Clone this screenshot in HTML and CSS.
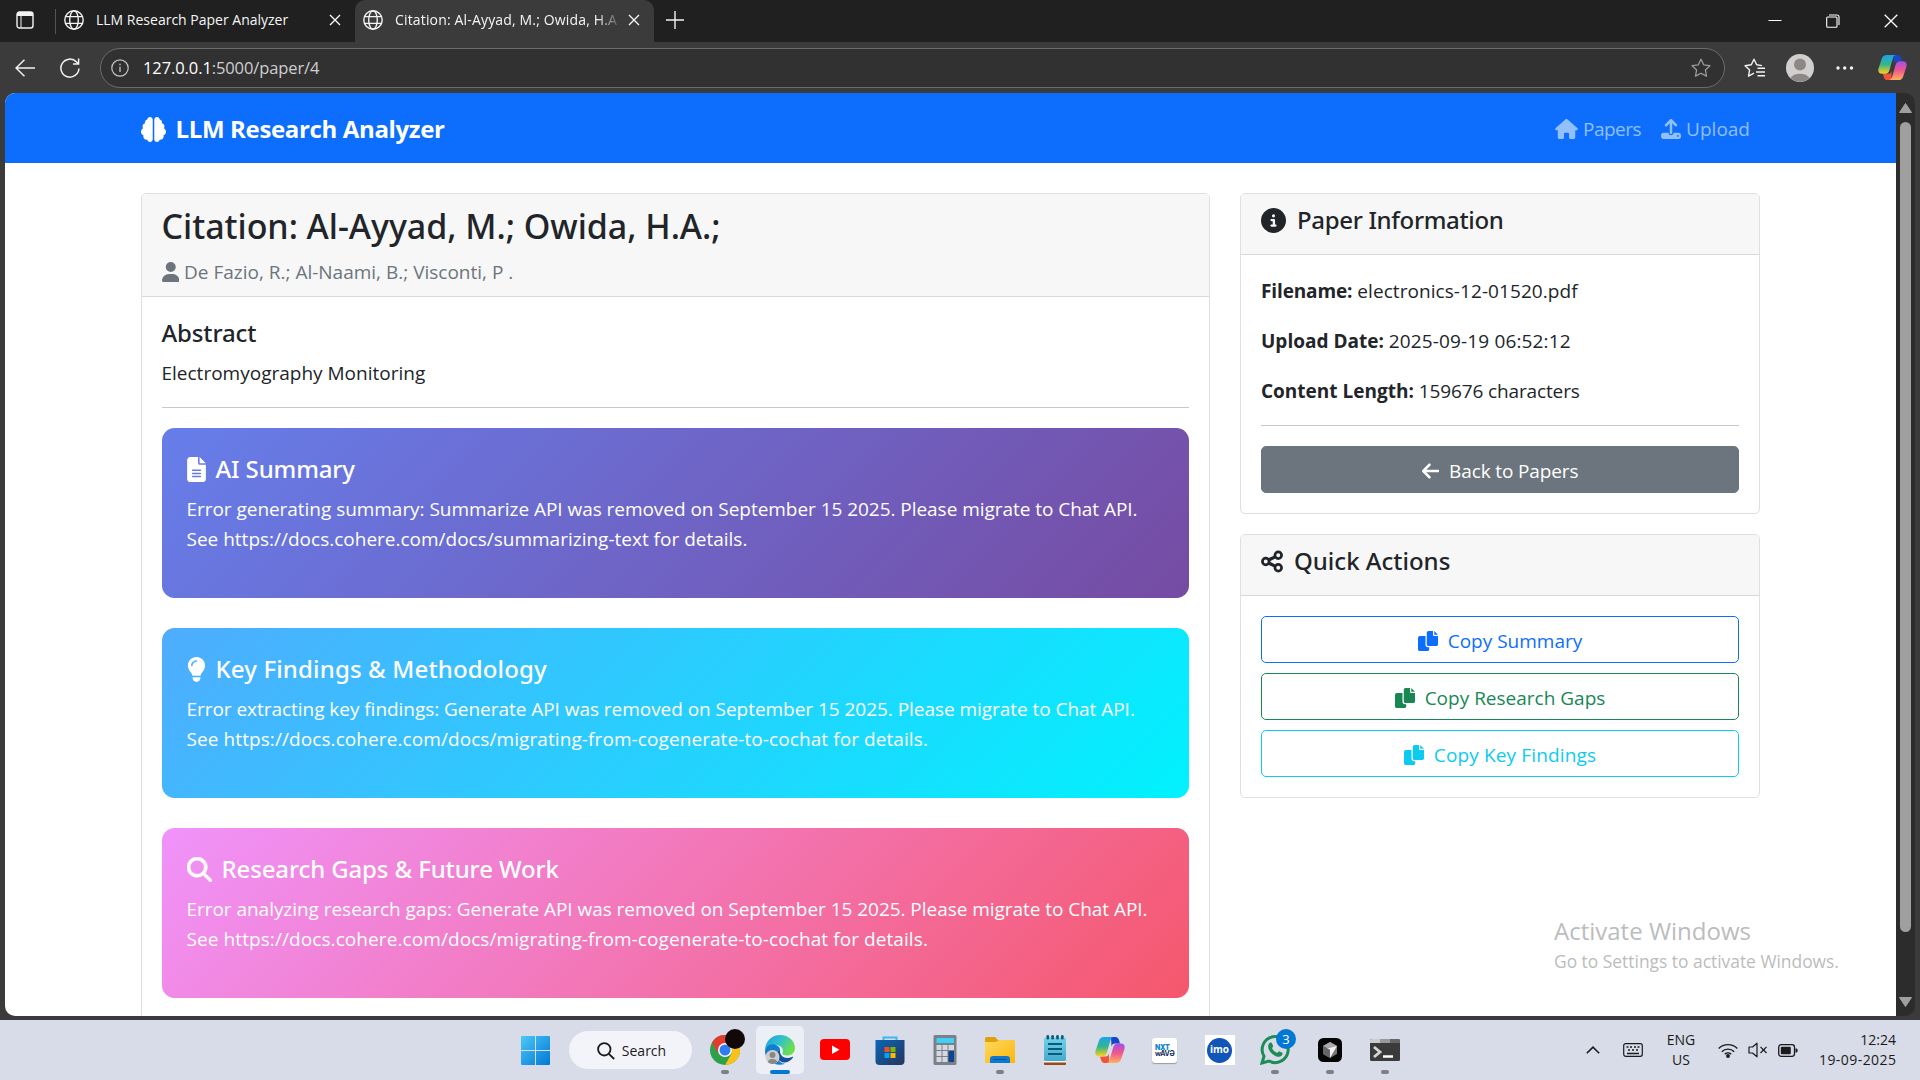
FILE: index.html
```html
<!DOCTYPE html>
<html lang="en">
<head>
<meta charset="utf-8">
<title>Citation: Al-Ayyad, M.; Owida, H.A.;</title>
<link rel="stylesheet" href="styles.css">
</head>
<body>
<svg class="defs" width="0" height="0" aria-hidden="true">
  <defs>
    <linearGradient id="cpA" x1="0" y1="0" x2="0" y2="1"><stop offset="0" stop-color="#1aa3f0"/><stop offset=".5" stop-color="#35b58a"/><stop offset="1" stop-color="#ffd21a"/></linearGradient>
    <linearGradient id="cpB" x1="0" y1="0" x2="0" y2="1"><stop offset="0" stop-color="#a54de8"/><stop offset=".5" stop-color="#f0588c"/><stop offset="1" stop-color="#ffb25a"/></linearGradient>
    <linearGradient id="win" x1="0" y1="0" x2="1" y2="1"><stop offset="0" stop-color="#4cc8f8"/><stop offset="1" stop-color="#0078d4"/></linearGradient>
    <linearGradient id="edgeTop" x1="0" y1="0" x2="1" y2=".5"><stop offset="0" stop-color="#1a9fe0"/><stop offset=".5" stop-color="#2fc0cf"/><stop offset="1" stop-color="#6be04a"/></linearGradient>
    <linearGradient id="folder" x1="0" y1="0" x2="1" y2="1"><stop offset="0" stop-color="#ffd75e"/><stop offset="1" stop-color="#fbb70a"/></linearGradient>
    <linearGradient id="store" x1="0" y1="0" x2="1" y2="1"><stop offset="0" stop-color="#0a66b8"/><stop offset="1" stop-color="#25355c"/></linearGradient>
    <linearGradient id="note" x1="0" y1="0" x2="0" y2="1"><stop offset="0" stop-color="#6fd3ea"/><stop offset="1" stop-color="#45a9cc"/></linearGradient>
    <symbol id="globe" viewBox="0 0 20 20"><g fill="none" stroke="#f2f2f2" stroke-width="1.4"><circle cx="10" cy="10" r="9.2"/><ellipse cx="10" cy="10" rx="4.3" ry="9.2"/><path d="M1.6 6.6h16.8M1.6 13.4h16.8"/></g></symbol>
    <symbol id="close" viewBox="0 0 12 12"><path d="M1 1l10 10M11 1L1 11" stroke="#f5f5f5" stroke-width="1.4"/></symbol>
    <symbol id="copilot" viewBox="0 0 30 28"><path d="M16 1h4.500c2 0 3 1.500 3.500 3l1 3.500h-5c-2 0-3 1-3.500 3z" fill="#1746c8"/><path d="M14 27H9.500c-2 0-3-1.500-3.500-3L5 20.500h5.500c2 0 3-1 3.500-3z" fill="#f0553a"/><path d="M9 1h10c-2 0-3 1.200-3.600 3.300L12 16c-.8 3-2 4.500-4.500 4.500H4c-3 0-4.300-2.500-3.500-5.500L4 4.500C4.700 2.300 6.500 1 9 1z" fill="url(#cpA)"/><path d="M21 27H11c2 0 3-1.200 3.600-3.300L18 12c.8-3 2-4.500 4.500-4.500H26c3 0 4.300 2.500 3.500 5.500L26 23.500c-.7 2.200-2.500 3.500-5 3.500z" fill="url(#cpB)"/></symbol>
    <symbol id="copy" viewBox="0 0 512 512"><path d="M384 96L384 0h-112c-26.510 0-48 21.490-48 48v288c0 26.510 21.490 48 48 48H464c26.510 0 48-21.490 48-48V128h-95.100C398.400 128 384 113.600 384 96zM416 0v96h96L416 0zM192 352V128h-144c-26.510 0-48 21.490-48 48v288c0 26.510 21.490 48 48 48h192c26.510 0 48-21.490 48-48L288 416h-32C220.700 416 192 387.300 192 352z"/></symbol>
  </defs>
</svg>

<header class="tabs">
  <div class="tab-actions"><svg width="18" height="18" viewBox="0 0 18 18"><rect x="1" y="1" width="16" height="16" rx="2.500" fill="none" stroke="#f2f2f2" stroke-width="1.400"/><path d="M1 3.500A2.500 2.500 0 0 1 3.500 1h11A2.500 2.500 0 0 1 17 3.500V5H1z" fill="#f2f2f2"/><path d="M5 5v12" stroke="#f2f2f2"/></svg></div>
  <div class="tab">
    <svg width="20" height="20"><use href="#globe"/></svg>
    <span class="tab-title">LLM Research Paper Analyzer</span>
    <svg width="12" height="12"><use href="#close"/></svg>
  </div>
  <div class="tab active">
    <svg width="20" height="20"><use href="#globe"/></svg>
    <span class="tab-title faded">Citation: Al-Ayyad, M.; Owida, H.A</span>
    <svg width="12" height="12"><use href="#close"/></svg>
  </div>
  <div class="new-tab"><svg width="18" height="18" viewBox="0 0 18 18"><path d="M9 0v18M0 9h18" stroke="#f2f2f2" stroke-width="1.400"/></svg></div>
  <div class="window-buttons">
    <svg width="14" height="14" viewBox="0 0 14 14"><path d="M.5 6.500h13" stroke="#fff"/></svg>
    <svg width="14" height="14" viewBox="0 0 14 14" fill="none" stroke="#fff" stroke-width="1.100"><rect x=".7" y="3" width="10.300" height="10.300" rx="1"/><path d="M3 1h8a2 2 0 0 1 2 2v8"/></svg>
    <svg width="14" height="14" viewBox="0 0 14 14"><path d="M.7.7l12.600 12.600M13.300.7L.7 13.300" stroke="#fff" stroke-width="1.300"/></svg>
  </div>
</header>

<div class="toolbar">
  <svg width="20" height="18" viewBox="0 0 20 18" fill="none" stroke="#f2f2f2" stroke-width="1.500"><path d="M20 9H1M9.500.8L1 9l8.500 8.200"/></svg>
  <svg class="reload" width="20" height="20" viewBox="0 0 20 20" fill="none" stroke="#f2f2f2" stroke-width="1.500"><path d="M18.900 10.500A9 9 0 1 1 16.500 4l2 1.800M18.600.5v5.600h-5.600"/></svg>
  <div class="address">
    <svg width="18" height="18" viewBox="0 0 18 18"><circle cx="9" cy="9" r="8.200" fill="none" stroke="#c4c4c4" stroke-width="1.200"/><path d="M9 7.800V13M9 4.800v1.500" stroke="#c4c4c4" stroke-width="1.300"/></svg>
    <span class="url"><b>127.0.0.1</b>:5000/paper/4</span>
    <svg width="20" height="20" viewBox="0 0 20 20" fill="none" stroke="#9c9c9c" stroke-width="1.300" stroke-linejoin="round"><path d="M10 1.200l2.700 5.600 6.200.9-4.500 4.300 1.100 6.100L10 15.200l-5.500 2.900 1.100-6.100L1.100 7.700l6.200-.9z"/></svg>
  </div>
  <svg class="fav" width="21" height="20" viewBox="0 0 21 20" fill="none" stroke="#f2f2f2" stroke-width="1.400" stroke-linejoin="round"><path d="M18 7.600l-5.300-.8L10 1.200 7.300 6.800l-6.200.9L5.600 12l-1.100 6.100 5.500-2.900M13.500 10.300H21M12 14h9M13.500 17.800H21"/></svg>
  <svg class="avatar" width="28" height="28" viewBox="0 0 28 28"><circle cx="14" cy="14" r="14" fill="#d2d0ce"/><circle cx="14" cy="10.500" r="6" fill="#8d8885"/><path d="M4.500 24a10.300 7 0 0 1 19 0 14 14 0 0 1-19 0z" fill="#8d8885"/></svg>
  <svg class="dots" width="18" height="4" viewBox="0 0 18 4" fill="#f2f2f2"><circle cx="2" cy="2" r="1.700"/><circle cx="8.700" cy="2" r="1.700"/><circle cx="15.500" cy="2" r="1.700"/></svg>
  <svg width="29" height="27"><use href="#copilot"/></svg>
</div>

<div class="window">
  <div class="page">
    <nav class="navbar">
      <a class="brand"><svg width="25" height="25" viewBox="0 0 512 512"><path d="M184 0c30.900 0 56 25.100 56 56V456c0 30.900-25.100 56-56 56c-28.900 0-52.700-21.900-55.700-50.100c-5.200 1.400-10.700 2.100-16.300 2.100c-35.300 0-64-28.700-64-64c0-7.400 1.300-14.600 3.600-21.200C21.400 367.400 0 338.200 0 304c0-31.900 18.700-59.500 45.800-72.300C37.100 220.800 32 207 32 192c0-30.700 21.600-56.300 50.400-62.600C80.800 123.900 80 118 80 112c0-29.900 20.600-55.100 48.300-62.100C131.300 21.900 155.100 0 184 0zM328 0c28.900 0 52.600 21.900 55.700 49.900c27.800 7 48.300 32.100 48.300 62.100c0 6-.8 11.900-2.400 17.400c28.800 6.200 50.400 31.900 50.400 62.600c0 15-5.100 28.800-13.800 39.700C493.300 244.500 512 272.100 512 304c0 34.200-21.400 63.400-51.600 74.800c2.300 6.600 3.600 13.800 3.600 21.200c0 35.300-28.700 64-64 64c-5.600 0-11.100-.7-16.300-2.100c-3 28.200-26.800 50.100-55.700 50.100c-30.900 0-56-25.100-56-56V56c0-30.900 25.100-56 56-56z"/></svg><span>LLM Research Analyzer</span></a>
      <div class="links">
        <a class="link papers"><svg width="23" height="20" viewBox="0 0 576 512"><path d="M575.800 255.500c0 18-15 32.100-32 32.100h-32l.7 160.200c0 2.700-.2 5.400-.5 8.100V472c0 22.100-17.900 40-40 40H456c-1.100 0-2.200 0-3.300-.1c-1.400 .1-2.800 .1-4.200 .1H416 392c-22.100 0-40-17.900-40-40V448 384c0-17.700-14.300-32-32-32H256c-17.700 0-32 14.300-32 32v64 24c0 22.100-17.900 40-40 40H160 128.100c-1.500 0-3-.1-4.500-.2c-1.200 .1-2.400 .2-3.600 .2H104c-22.100 0-40-17.900-40-40V360c0-.9 0-1.900 .1-2.800V287.600H32c-18 0-32-14-32-32.100c0-9 3-17 10-24L266.400 8c7-7 15-8 22-8s15 2 21 7L564.800 231.500c8 7 12 15 11 24z"/></svg><span>Papers</span></a>
        <a class="link"><svg width="20" height="20" viewBox="0 0 512 512"><path d="M288 109.300V352c0 17.700-14.300 32-32 32s-32-14.300-32-32V109.300l-73.400 73.400c-12.500 12.500-32.800 12.500-45.300 0s-12.500-32.800 0-45.300l128-128c12.500-12.500 32.800-12.500 45.300 0l128 128c12.500 12.500 12.500 32.800 0 45.300s-32.800 12.500-45.300 0L288 109.300zM64 352H192c0 35.300 28.700 64 64 64s64-28.700 64-64H448c35.300 0 64 28.700 64 64v32c0 35.300-28.700 64-64 64H64c-35.300 0-64-28.700-64-64V416c0-35.300 28.700-64 64-64zM432 456a24 24 0 1 0 0-48 24 24 0 1 0 0 48z"/></svg><span>Upload</span></a>
      </div>
    </nav>
    <main class="container">
      <article class="card paper">
        <div class="card-header">
          <h1>Citation: Al-Ayyad, M.; Owida, H.A.;</h1>
          <p class="authors"><svg width="17.500" height="20" viewBox="0 0 448 512"><path d="M224 256A128 128 0 1 0 224 0a128 128 0 1 0 0 256zm-45.700 48C79.800 304 0 383.800 0 482.300C0 498.700 13.300 512 29.700 512H418.300c16.400 0 29.700-13.300 29.700-29.700C448 383.800 368.200 304 269.700 304H178.300z"/></svg><span>De Fazio, R.; Al-Naami, B.; Visconti, P .</span></p>
        </div>
        <div class="card-body">
          <h2><span class="tight">Abstract</span></h2>
          <p>Electromyography Monitoring</p>
          <hr>
          <section class="panel summary">
            <h2><svg width="19" height="25" viewBox="0 0 384 512"><path d="M64 0C28.700 0 0 28.700 0 64V448c0 35.300 28.700 64 64 64H320c35.300 0 64-28.700 64-64V160H256c-17.700 0-32-14.300-32-32V0H64zM256 0V128H384L256 0zM112 256H272c8.800 0 16 7.200 16 16s-7.200 16-16 16H112c-8.800 0-16-7.200-16-16s7.200-16 16-16zm0 64H272c8.800 0 16 7.200 16 16s-7.200 16-16 16H112c-8.800 0-16-7.200-16-16s7.200-16 16-16zm0 64H272c8.800 0 16 7.200 16 16s-7.200 16-16 16H112c-8.800 0-16-7.200-16-16s7.200-16 16-16z"/></svg><span class="tight">AI Summary</span></h2>
            <p><span class="first">Error generating summary: Summarize API was removed on September 15 2025. Please migrate to Chat API.</span><br><span>See https://docs.cohere.com/docs/summarizing-text for details.</span></p>
          </section>
          <section class="panel findings">
            <h2><svg width="19" height="25" viewBox="0 0 384 512"><path d="M272 384c9.600-31.900 29.500-59.100 49.200-86.200l0 0c5.200-7.100 10.400-14.200 15.400-21.400c19.800-28.500 31.400-63 31.400-100.300C368 78.800 289.200 0 192 0S16 78.800 16 176c0 37.300 11.600 71.900 31.400 100.300c5 7.200 10.200 14.300 15.400 21.400l0 0c19.800 27.100 39.700 54.400 49.200 86.200H272zM192 512c44.200 0 80-35.800 80-80V416H112v16c0 44.200 35.800 80 80 80zM112 176c0 8.800-7.200 16-16 16s-16-7.200-16-16c0-61.900 50.100-112 112-112c8.800 0 16 7.200 16 16s-7.200 16-16 16c-44.200 0-80 35.800-80 80z"/></svg><span class="loose">Key Findings &amp; Methodology</span></h2>
            <p><span class="first">Error extracting key findings: Generate API was removed on September 15 2025. Please migrate to Chat API.</span><br><span class="url-line">See https://docs.cohere.com/docs/migrating-from-cogenerate-to-cochat for details.</span></p>
          </section>
          <section class="panel gaps">
            <h2><svg width="25" height="25" viewBox="0 0 512 512"><path stroke="#fff" stroke-width="10" d="M416 208c0 45.900-14.900 88.300-40 122.700L502.600 457.400c12.500 12.500 12.500 32.800 0 45.300s-32.800 12.500-45.300 0L330.700 376c-34.400 25.200-76.800 40-122.700 40C93.100 416 0 322.900 0 208S93.100 0 208 0S416 93.100 416 208zM208 352a144 144 0 1 0 0-288 144 144 0 1 0 0 288z"/></svg><span class="tight">Research Gaps &amp; Future Work</span></h2>
            <p><span class="first">Error analyzing research gaps: Generate API was removed on September 15 2025. Please migrate to Chat API.</span><br><span class="url-line">See https://docs.cohere.com/docs/migrating-from-cogenerate-to-cochat for details.</span></p>
          </section>
        </div>
      </article>
      <aside class="side">
        <section class="card">
          <div class="card-header"><h2><svg width="25" height="25" viewBox="0 0 512 512"><path d="M256 512A256 256 0 1 0 256 0a256 256 0 1 0 0 512zM216 336h24V272H216c-13.300 0-24-10.700-24-24s10.700-24 24-24h48c13.300 0 24 10.700 24 24v88h8c13.300 0 24 10.700 24 24s-10.700 24-24 24H216c-13.300 0-24-10.700-24-24s10.700-24 24-24zm40-208a32 32 0 1 1 0 64 32 32 0 1 1 0-64z"/></svg><span class="info-title">Paper Information</span></h2></div>
          <div class="card-body">
            <p><strong class="tight">Filename:</strong> <span class="file">electronics-12-01520.pdf</span></p>
            <p><strong>Upload Date:</strong> <span class="loose">2025-09-19 06:52:12</span></p>
            <p><strong>Content Length:</strong> <span class="tight">159676 characters</span></p>
            <hr>
            <a class="btn solid"><svg width="17.500" height="20" viewBox="0 0 448 512"><path d="M9.400 233.400c-12.500 12.500-12.500 32.800 0 45.300l160 160c12.500 12.500 32.800 12.500 45.300 0s12.500-32.800 0-45.300L109.200 288 416 288c17.700 0 32-14.300 32-32s-14.300-32-32-32l-306.700 0L214.600 118.600c12.500-12.500 12.500-32.800 0-45.300s-32.800-12.500-45.300 0l-160 160z"/></svg><span class="tight">Back to Papers</span></a>
          </div>
        </section>
        <section class="card">
          <div class="card-header"><h2><svg width="22" height="25" viewBox="0 0 448 512"><g fill="none" stroke="#212529"><g stroke-width="56"><circle cx="352" cy="128" r="68"/><circle cx="96" cy="256" r="68"/><circle cx="352" cy="384" r="68"/></g><path d="M165 222l122-61M165 290l122 61" stroke-width="68"/></g></svg><span>Quick Actions</span></h2></div>
          <div class="card-body buttons">
            <a class="btn blue"><svg width="20" height="20"><use href="#copy"/></svg><span>Copy Summary</span></a>
            <a class="btn green"><svg width="20" height="20"><use href="#copy"/></svg><span>Copy Research Gaps</span></a>
            <a class="btn cyan"><svg width="20" height="20"><use href="#copy"/></svg><span class="loose">Copy Key Findings</span></a>
          </div>
        </section>
      </aside>
    </main>
  </div>
  <div class="scrollbar">
    <svg width="13" height="10" viewBox="0 0 13 10"><path d="M6.500.5L12.500 9.500H.5z" fill="#9f9f9f" stroke="#9f9f9f" stroke-linejoin="round"/></svg>
    <div class="thumb"></div>
    <svg width="13" height="10" viewBox="0 0 13 10"><path d="M6.500 9.500L12.500.5H.5z" fill="#9f9f9f" stroke="#9f9f9f" stroke-linejoin="round"/></svg>
  </div>
</div>

<div class="watermark"><div class="wm-title">Activate Windows</div><div class="wm-text">Go to Settings to activate Windows.</div></div>

<footer class="taskbar">
  <div class="cell"><svg width="29" height="29" viewBox="0 0 29 29" fill="url(#win)"><path d="M1 0h13v14H0V1a1 1 0 0 1 1-1zM15 0h13a1 1 0 0 1 1 1v13H15zM0 15h14v14H1a1 1 0 0 1-1-1zM15 15h14v13a1 1 0 0 1-1 1H15z"/></svg></div>
  <div class="search"><svg width="18" height="18" viewBox="0 0 18 18" fill="none" stroke="#1b1b1b" stroke-width="1.800"><circle cx="7.300" cy="7.300" r="6.200"/><path d="M11.800 11.800l5.400 5.200"/></svg><span>Search</span></div>
  <div class="apps">
    <div class="cell running"><svg width="30" height="30" viewBox="0 0 30 30"><circle cx="15" cy="15" r="15" fill="#2da04a"/><path d="M2 7.500A15 15 0 0 1 28 7.500H15L8.500 18.800z" fill="#e33b2e"/><path d="M28 7.500A15 15 0 0 1 15 30l6.500-11.200V7.500z" fill="#fbc116"/><circle cx="15" cy="15" r="7" fill="#fff"/><circle cx="15" cy="15" r="5.500" fill="#2f7bf0"/></svg><i class="profile"></i></div>
    <div class="cell current"><svg width="30" height="30" viewBox="0 0 30 30"><path d="M0 16C0 6 7 0 15 0c9 0 15 6.500 15 13 0 5-4 7.500-8 7.500-3.500 0-5-1.300-4.500-2.500 1-2 .8-6-4-7.500C8 9 2 11 0 16z" fill="url(#edgeTop)"/><path d="M0 16c1-5 6-8 11-6 3 1.200 4 3 4 4.500-3 1-4.500 5-3 8.500 1.300 3.300 4.500 5.500 8 5.800C11 32 0 26.500 0 16z" fill="#0f7fcf"/><path d="M15 14.500c-3 1-4 5-2.500 8.500 2.500 5.500 10.500 6.500 15.500-.5.500-.8-.2-1-1-.6-6 3-13-.4-12-7.400z" fill="#12509c"/><circle cx="7.500" cy="22" r="7" fill="#d0cecc"/><circle cx="7.500" cy="20" r="3" fill="#8a8886"/><path d="M2.700 27a4.900 3.800 0 0 1 9.600 0 7 7 0 0 1-9.600 0z" fill="#8a8886"/></svg></div>
    <div class="cell"><svg width="30" height="30" viewBox="0 0 30 30"><rect y="4" width="30" height="21" rx="4" fill="#f00"/><path d="M12 10.500v8.500l7.500-4.200z" fill="#fff"/></svg></div>
    <div class="cell"><svg width="30" height="30" viewBox="0 0 30 30"><path d="M8.500 6V2.500h13V6" fill="none" stroke="#39b9f2" stroke-width="2"/><path d="M.5 5h29v21a4 4 0 0 1-4 4h-21a4 4 0 0 1-4-4z" fill="url(#store)"/><path d="M9.500 12h5v5h-5z" fill="#f25022"/><path d="M15.500 12h5v5h-5z" fill="#7fba00"/><path d="M9.500 18h5v5h-5z" fill="#00a4ef"/><path d="M15.500 18h5v5h-5z" fill="#ffb900"/></svg></div>
    <div class="cell"><svg width="24" height="30" viewBox="0 0 24 30"><rect x=".5" width="23" height="30" rx="1.500" fill="#7b8189"/><path d="M3.500 3h17.500v5H3.500z" fill="#3fd0f7"/><path d="M3.500 10h5v5h-5zM9.500 10h5v5h-5zM15.500 10h5.500v5h-5.500zM3.500 16h5v5h-5zM9.500 16h5v5h-5zM3.500 22h5v5h-5zM9.500 22h5v5h-5z" fill="#d3d9df"/><path d="M15.500 16h5.500v11h-5.500z" fill="#0f4391"/></svg></div>
    <div class="cell running"><svg width="30" height="28" viewBox="0 0 30 28"><path d="M0 2.500A1.500 1.500 0 0 1 1.500 1H10l3 3h15a2 2 0 0 1 2 2v6H0z" fill="#dfa00b"/><path d="M0 6h11l3-2h15a1 1 0 0 1 1 1v22H0z" fill="url(#folder)"/><path d="M5 27v-4a3 3 0 0 1 3-3h14a3 3 0 0 1 3 3v4z" fill="#0f78d0"/><path d="M9 23.500h12" stroke="#0b4f92" stroke-width="1.200" stroke-linecap="round"/></svg></div>
    <div class="cell"><svg width="22" height="30" viewBox="0 0 22 30"><rect y="25" width="22" height="5" rx="1" fill="#9a4a12"/><rect y="24" width="22" height="3.500" fill="#f3f3f3"/><rect y="2.500" width="22" height="23.500" rx="1.500" fill="url(#note)"/><path d="M4 9h14M4 14h14M4 19h14" stroke="#0c5a78" stroke-width="1.800"/><g fill="#0c5a78"><rect x="2.500" width="2.600" height="4.500" rx="1.300"/><rect x="7.300" width="2.600" height="4.500" rx="1.300"/><rect x="12.200" width="2.600" height="4.500" rx="1.300"/><rect x="17" width="2.600" height="4.500" rx="1.300"/></g></svg></div>
    <div class="cell"><svg width="30" height="28"><use href="#copilot"/></svg></div>
    <div class="cell"><div class="nxt"><b>NXT</b><br>wAVƏ</div></div>
    <div class="cell"><div class="imo"><span>imo</span></div></div>
    <div class="cell running"><svg width="30" height="30" viewBox="0 0 30 30"><path d="M2 28l2-6.800A13 13 0 1 1 9 26z" fill="none" stroke="#1d8c56" stroke-width="3"/><path d="M9 8.500c1.500-1.700 2.700-1 3.200.3l.9 2.200c.3.800-1.300 1.800-.8 2.800 1.200 2 2.700 3.200 4.600 4 .9.300 1.700-1.800 2.600-1.400l2.400 1.200c1.200.6.600 2.300-.3 3.200-2.200 2-5.600.9-8.300-1-3.400-2.600-6.900-7.400-4.300-11.300z" fill="#1d8c56"/></svg><i class="badge">3</i></div>
    <div class="cell running"><svg width="24" height="24" viewBox="0 0 24 24"><rect width="24" height="24" rx="5.500" fill="#050505"/><path d="M12 4l7 4v8l-7 4-7-4V8z" fill="#777"/><path d="M5 8l7-4 7 4-7 3.500z" fill="#aaa"/><path d="M19 8l-7 12v-8.500H6z" fill="#f2f2f2"/><path d="M5 8l7 4v8l-7-4z" fill="#666"/></svg></div>
    <div class="cell running"><svg width="30" height="22" viewBox="0 0 30 22"><rect width="30" height="22" rx="1.500" fill="#3b3b3b"/><path d="M0 4V1.500A1.500 1.500 0 0 1 1.500 0H10v4z" fill="#ccc"/><path d="M10 0h10v4H10z" fill="#999"/><path d="M20 0h8.500A1.500 1.500 0 0 1 30 1.500V4H20z" fill="#666"/><path d="M4 8l6 5-6 5" fill="none" stroke="#d5d5d5" stroke-width="2.800"/><path d="M13 17.500h10" stroke="#fff" stroke-width="2.500"/></svg></div>
  </div>
  <div class="tray">
    <svg class="chev" width="14" height="8" viewBox="0 0 14 8" fill="none" stroke="#1b1b1b" stroke-width="1.600"><path d="M.8 7.200L7 1.200l6.200 6"/></svg>
    <svg class="kbd" width="20" height="14" viewBox="0 0 20 14"><rect x=".7" y=".7" width="18.600" height="12.600" rx="2" fill="none" stroke="#1b1b1b" stroke-width="1.200"/><path d="M3.500 4h2M7 4h2M11 4h2M14.500 4h2M5 7h2M9 7h2M13 7h2M4 10.500h12" stroke="#1b1b1b" stroke-width="1.300"/></svg>
    <div class="lang">ENG<br>US</div>
    <svg width="20" height="15" viewBox="0 0 20 15" fill="none" stroke="#1b1b1b" stroke-width="1.400"><path d="M.7 5.500a13 13 0 0 1 18.600 0M3.800 8.700a8.700 8.700 0 0 1 12.400 0M6.800 11.300a4.600 4.600 0 0 1 6.400 0"/><circle cx="10" cy="13" r="1.200" fill="#1b1b1b"/></svg>
    <svg class="vol" width="20" height="16" viewBox="0 0 20 16" fill="none" stroke="#1b1b1b" stroke-width="1.200"><path d="M1 5h3.500L9 1.200v13.600L4.500 11H1zM12.500 4.800l6 6.200M18.500 4.800l-6 6.200" stroke-linejoin="round"/></svg>
    <svg class="bat" width="20" height="13" viewBox="0 0 20 13"><rect x=".7" y=".7" width="15.800" height="11.600" rx="2.500" fill="none" stroke="#1b1b1b" stroke-width="1.300"/><rect x="2.800" y="2.800" width="10" height="7.400" rx="1" fill="#1b1b1b"/><path d="M17.500 4.200c1.500.3 2.200 1 2.200 2.300s-.7 2-2.200 2.300z" fill="#1b1b1b"/></svg>
    <div class="clock">12:24<br><span class="date">19-09-2025</span></div>
  </div>
</footer>
</body>
</html>
```
FILE: styles.css
```css
* { box-sizing: border-box; }
body {
  margin: 0;
  width: 1920px;
  height: 1080px;
  overflow: hidden;
  display: flex;
  flex-direction: column;
  background: #3b3b3b;
  color: #212529;
  font-family: "Open Sans", "Noto Sans", sans-serif;
  font-size: 19px;
  line-height: 30px;
}
svg { display: block; flex: none; }
.defs { position: absolute; }
h1, h2, p { margin: 0; }
span, strong { white-space: nowrap; }
.tight { letter-spacing: -.13px; }
.loose { letter-spacing: .14px; }

/* Browser tabs */
.tabs { height: 42px; display: flex; background: #202020; color: #f5f5f5; font-size: 14px; flex: none; }
.tab-actions { width: 56px; padding: 2px 0 0 16px; border-right: 1px solid #555; height: 25px; margin-top: 9px; }
.tab { width: 299px; display: flex; align-items: center; padding: 0 14px 2px 8px; }
.tab-title { flex: 1; margin-left: 12px; overflow: hidden; }
.active { background: #3b3b3b; border-radius: 10px 10px 0 0; }
.faded { letter-spacing: .16px; mask-image: linear-gradient(90deg, #000 89%, transparent 101%); }
.tab.active svg:last-child { margin-left: 7px; }
.new-tab { padding: 11px 0 0 12px; }
.window-buttons { margin-left: auto; display: flex; gap: 44px; padding: 14px 22px 0 0; }

/* Browser toolbar */
.toolbar { height: 51px; flex: none; display: flex; align-items: center; padding: 0 12px 0 15px; }
.reload { margin-left: 25px; }
.address { width: 1625px; height: 40px; margin-left: 20px; display: flex; align-items: center; border: 1px solid #6c6c6c; border-radius: 20px; background: #313131; padding: 0 13px 0 10px; }
.url { flex: 1; margin-left: 14px; color: #cfcfcf; font-size: 16.5px; letter-spacing: -.1px; }
.url b { font-weight: 400; color: #fff; }
.fav { margin-left: 19px; }
.avatar { margin-left: 21px; }
.dots { margin: 0 24px 0 22px; }

/* Browser viewport */
.window { height: 923px; flex: none; margin: 0 5px; display: flex; border-radius: 10px; overflow: hidden; }
.page { width: 1891px; background: #fff; }
.scrollbar { width: 19px; background: #2c2c2c; display: flex; flex-direction: column; align-items: center; padding: 10px 0 9px; }
.thumb { width: 11px; height: 810px; margin: 9px 0 auto; border-radius: 6px; background: #9f9f9f; }

/* Navigation */
.navbar { height: 70px; background: #0d6efd; padding: 2px 146px 0 135.5px; display: flex; align-items: center; justify-content: space-between; }
.brand { display: flex; align-items: center; gap: 10px; color: #fff; fill: #fff; font-size: 24px; font-weight: 700; letter-spacing: -.35px; }
.links { display: flex; gap: 20px; }
.link { display: flex; align-items: center; gap: 5px; color: #92bffe; fill: #92bffe; }
.papers { letter-spacing: -.5px; }

/* Content */
.container { display: grid; grid-template-columns: 1069.5px 520px; gap: 30px; align-items: start; padding: 30px 0 0 135.5px; }
.card { border: 1px solid #dedfe0; border-radius: 5px; background: #fff; overflow: hidden; }
.side { display: grid; gap: 20px; }
.card-header { background: #f7f7f7; border-bottom: 1px solid #d9d9da; padding: 10px 20px; }
.card-body { padding: 20px; }
h1 { font-family: "Noto Sans", sans-serif; font-size: 34px; line-height: 42px; font-weight: 500; letter-spacing: -.05px; padding-top: 1px; margin-bottom: 9px; }
h2 { font-family: "Noto Sans", sans-serif; font-size: 24px; line-height: 30px; font-weight: 500; padding-top: 1px; margin-bottom: 9px; display: flex; align-items: center; gap: 10px; fill: currentColor; }
.card-body p { padding-top: 1px; margin-bottom: 19px; }
.authors { display: flex; align-items: center; gap: 5px; padding-top: 1px; margin-bottom: -1px; color: #6c757d; fill: #6c757d; }
hr { border: 0; height: 1px; margin: 19px 0 20px; background: #c7c8ca; }
.panel { height: 170px; margin-bottom: 30px; padding: 25px; border-radius: 12.5px; color: #fff; }
.first { letter-spacing: -.04px; }
.url-line { letter-spacing: .085px; }
.summary { background: linear-gradient(135deg, #667eea 0%, #764ba2 100%); }
.findings { background: linear-gradient(135deg, #4facfe 0%, #00f2fe 100%); }
.gaps { background: linear-gradient(135deg, #f093fb 0%, #f5576c 100%); }
.side .card-header h2 { gap: 11px; }
.info-title { letter-spacing: -.33px; }
.file { letter-spacing: .07px; }
.buttons { display: grid; gap: 10px; }
.btn { height: 47px; border: 1px solid; border-radius: 5px; padding-top: 2px; display: flex; align-items: center; justify-content: center; gap: 10px; fill: currentColor; }
.solid { background: #6c757d; border-color: #6c757d; color: #fff; }
.blue { color: #0d6efd; }
.green { color: #198754; }
.cyan { color: #0dcaf0; }

/* Desktop watermark floats over everything */
.watermark { position: absolute; left: 1554px; top: 913px; color: #bcbcbc; }
.wm-title { font-size: 24px; line-height: 36px; }
.wm-text { font-size: 17.4px; line-height: 24px; }

/* Taskbar */
.taskbar { height: 60px; flex: none; margin-top: 4px; display: flex; align-items: center; background: #d8dce8; padding: 0 24px 0 508px; color: #1b1b1b; font-size: 14px; }
.cell { position: relative; width: 55px; height: 60px; display: flex; align-items: center; justify-content: center; }
.search { width: 123px; height: 38px; margin: 0 5px 0 6px; padding: 1px 0 0 2px; border-radius: 19px; background: #f3f4f9; display: flex; align-items: center; justify-content: center; gap: 7px; }
.apps { display: flex; }
.running::after { content: ""; position: absolute; bottom: 6px; left: 24px; width: 8px; height: 4px; border-radius: 2px; background: #7d7f85; }
.current::before { content: ""; position: absolute; left: 4px; top: 6px; width: 48px; height: 48px; border-radius: 5px; background: #edeff6; }
.current svg { position: relative; }
.current::after { content: ""; position: absolute; bottom: 6px; left: 18px; width: 20px; height: 4px; border-radius: 2px; background: #0078d4; }
.profile { position: absolute; left: 28px; top: 9px; width: 20px; height: 20px; border-radius: 50%; background: #120808; }
.badge { position: absolute; left: 29px; top: 9px; width: 20px; height: 20px; border-radius: 50%; background: #0078d4; color: #fff; font-style: normal; font-size: 13px; line-height: 20px; text-align: center; }
.nxt { width: 25px; height: 25px; border-radius: 3px; background: #fff; box-shadow: 0 1px 1px #999; font: 700 7px/6px Inter, sans-serif; letter-spacing: -.3px; color: #16305a; padding: 7px 0 0 3px; }
.nxt b { color: #1287d6; }
.imo { width: 30px; height: 30px; background: #fff; padding: 2.5px; }
.imo span { display: block; width: 25px; height: 25px; border-radius: 50%; background: #1055b8; color: #fff; font-weight: 700; font-size: 10px; line-height: 23px; text-align: center; }
.tray { margin-left: auto; display: flex; align-items: center; line-height: 20px; }
.chev { margin-right: 23px; }
.kbd { margin-right: 23px; }
.lang { width: 30px; text-align: center; margin-right: 22px; }
.vol { margin-left: 10px; }
.bat { margin: 0 19px 0 10px; }
.clock { text-align: right; width: 79px; }
.date { letter-spacing: .45px; margin-right: -.5px; }
```
